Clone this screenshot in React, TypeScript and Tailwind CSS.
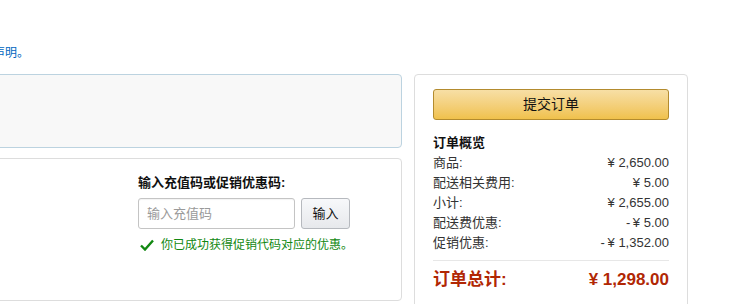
import React from "react";

const font = { fontFamily: '"Liberation Sans", Arial, "Noto Sans CJK SC", sans-serif' };

const rows: [string, string][] = [
  ["商品:", "¥ 2,650.00"],
  ["配送相关费用:", "¥ 5.00"],
  ["小计:", "¥ 2,655.00"],
  ["配送费优惠:", "-\u2009¥ 5.00"],
  ["促销优惠:", "-\u2009¥ 1,352.00"],
];

export default function App() {
  return (
    <div
      className="w-[746px] h-[304px] overflow-hidden bg-white text-[#111]"
      style={font}
    >
      <div className="pt-[45px] ml-[-7px] text-[12px] leading-[16px] text-[#0066c0]">
        声明。
      </div>
      <div className="flex mt-[13px] ml-[-20px]">
        <div className="w-[422px] flex flex-col">
          <div className="h-[74px] rounded-[4px] border border-[#bcd3e0] bg-[#f8f8f8]" />
          <div className="mt-[10px] h-[143px] rounded-[4px] border border-[#dddddd] bg-white flex">
            <div className="flex-1" />
            <div className="w-[263px] pt-[14px]">
              <div className="text-[13px] leading-[20px] font-bold text-[#111]">
                输入充值码或促销优惠码:
              </div>
              <div className="flex mt-[5px] gap-[6px]">
                <div className="w-[157px] h-[31px] rounded-[3px] border border-[#c4c4c4] bg-white flex items-center pl-[8px] text-[13px] text-[#9a9a9a] shadow-[inset_0_1px_1px_rgba(0,0,0,0.05)]">
                  输入充值码
                </div>
                <div className="w-[49px] h-[31px] rounded-[3px] border border-[#b6b9be] bg-gradient-to-b from-[#f7f8fa] to-[#e7e9ec] flex items-center justify-center text-[13px] text-[#111]">
                  输入
                </div>
              </div>
              <div className="flex items-center mt-[6px] h-[20px] text-[12px] text-[#118811]">
                <svg width="14" height="12" viewBox="0 0 14 12" className="ml-[2px] mr-[7px]">
                  <path d="M1 6.5 L5 10.5 L13 1.5" fill="none" stroke="#118811" strokeWidth="2.4" />
                </svg>
                你已成功获得促销代码对应的优惠。
              </div>
            </div>
          </div>
        </div>
        <div className="ml-[12px] w-[274px] h-[260px] rounded-[4px] border border-[#dddddd] bg-white px-[18px] pt-[14px]">
          <div className="h-[31px] rounded-[3px] border border-[#b38b2e] bg-gradient-to-b from-[#f7dfa5] to-[#f0c14b] flex items-center justify-center text-[14px] text-[#111]">
            提交订单
          </div>
          <div className="mt-[13px] text-[13px] leading-[20px] font-bold text-[#111]">订单概览</div>
          {rows.map(([l, v]) => (
            <div key={l} className="flex justify-between text-[13px] leading-[20px] text-[#333]">
              <span>{l}</span>
              <span>{v}</span>
            </div>
          ))}
          <div className="mt-[7px] border-t border-[#e7e7e7]" />
          <div className="mt-[7px] flex justify-between text-[17px] leading-[24px] font-bold text-[#b12704]">
            <span>订单总计:</span>
            <span>¥ 1,298.00</span>
          </div>
        </div>
      </div>
    </div>
  );
}
